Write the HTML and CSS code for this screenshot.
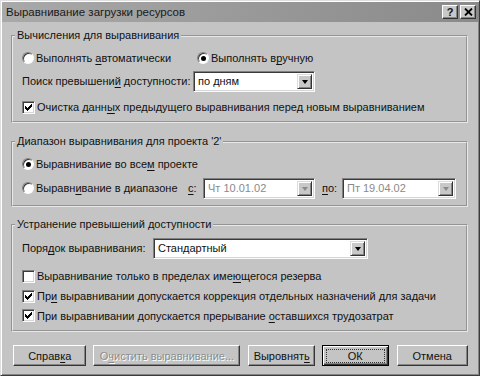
FILE: index.html
```html
<!DOCTYPE html>
<html lang="ru">
<head>
    <meta charset="UTF-8">
    <title>Выравнивание загрузки ресурсов</title>
    <link rel="stylesheet" href="styles.css">
</head>
<body>
<div class="dialog">
    <div class="titlebar">
        <span class="title">Выравнивание загрузки ресурсов</span>
        <span class="capbtn help">?</span>
        <span class="capbtn close">
            <svg width="9" height="8" viewBox="0 0 9 8"><path d="M1 0.5 L8 7.5 M8 0.5 L1 7.5" stroke="#000" stroke-width="1.8"/></svg>
        </span>
    </div>

    <div class="content">
        <fieldset class="group g1">
            <legend>Вычисления для выравнивания</legend>
            <div class="row">
                <label class="opt w-auto"><span class="radio"></span><span>Выполнять <u>а</u>втоматически</span></label>
                <label class="opt"><span class="radio on"></span><span>Выполнять в<u>р</u>учную</span></label>
            </div>
            <div class="row r2">
                <span class="lbl w-search">Поиск превышени<u>й</u> доступности:</span>
                <div class="combo w-days"><span class="val">по дням</span><span class="drop"><i class="arrow"></i></span></div>
            </div>
            <div class="row r3">
                <label class="opt"><span class="check on"></span><span>Очистка данн<u>ы</u>х предыдущего выравнивания перед новым выравниванием</span></label>
            </div>
        </fieldset>

        <fieldset class="group g2">
            <legend>Диапазон выравнивания для проекта '2'</legend>
            <div class="row">
                <label class="opt"><span class="radio on"></span><span>Выравнивание во все<u>м</u> проекте</span></label>
            </div>
            <div class="row r-range">
                <label class="opt w-range"><span class="radio"></span><span>Выравн<u>и</u>вание в диапазоне</span></label>
                <span class="lbl w-from"><u>с</u>:</span>
                <div class="combo off w-date1"><span class="val">Чт 10.01.02</span><span class="drop"><i class="arrow"></i></span></div>
                <span class="lbl w-to"><u>п</u>о:</span>
                <div class="combo off w-date2"><span class="val">Пт 19.04.02</span><span class="drop"><i class="arrow"></i></span></div>
            </div>
        </fieldset>

        <fieldset class="group g3">
            <legend>Устранение превышений доступности</legend>
            <div class="row">
                <span class="lbl w-order">Поря<u>д</u>ок выравнивания:</span>
                <div class="combo w-std"><span class="val">Стандартный</span><span class="drop"><i class="arrow"></i></span></div>
            </div>
            <div class="row c1">
                <label class="opt"><span class="check"></span><span>Выравнивание только в пределах име<u>ю</u>щегося резерва</span></label>
            </div>
            <div class="row">
                <label class="opt"><span class="check on"></span><span>Пр<u>и</u> выравнивании допускается коррекция отдельных назначений для задачи</span></label>
            </div>
            <div class="row c3">
                <label class="opt"><span class="check on"></span><span>При выравнивании допускается прерывание <u>о</u>ставшихся трудозатрат</span></label>
            </div>
        </fieldset>

        <div class="buttons">
            <span class="btn b-help"><span>Справ<u>к</u>а</span></span>
            <span class="btn b-clear disabled"><span>О<u>ч</u>истить выравнивание...</span></span>
            <span class="btn b-level"><span>Выровнят<u>ь</u></span></span>
            <span class="btn b-ok default"><span class="focus">ОК</span></span>
            <span class="btn b-cancel">Отмена</span>
        </div>
    </div>
</div>
</body>
</html>
```

FILE: styles.css
```css
* {
    box-sizing: border-box;
}
body {
    margin: 0;
    font-family: "Liberation Sans", Arial, sans-serif;
    font-size: 11px;
    color: #111;
}
u {
    text-decoration-thickness: 1px;
    text-underline-offset: 2px;
}

.dialog {
    width: 480px;
    height: 376px;
    background: #c4c4c4;
    border: 1px solid;
    border-color: #dedede #3c3c3c #3c3c3c #dedede;
    box-shadow: inset 1px 1px 0 #fff, inset -1px -1px 0 #858585;
    padding: 1px;
    display: flex;
    flex-direction: column;
}

/* title bar */
.titlebar {
    height: 20px;
    background: linear-gradient(to right, #a9a9a9, #8a8a8a);
    display: flex;
    align-items: center;
    padding: 0 2px 0 4px;
}
.title {
    flex: 1;
    color: #1a1a1a;
    font-size: 11.5px;
}
.capbtn {
    width: 16px;
    height: 14px;
    background: #c8c8c8;
    border: 1px solid;
    border-color: #fff #333 #333 #fff;
    box-shadow: inset -1px -1px 0 #858585;
    display: flex;
    align-items: center;
    justify-content: center;
    font-weight: bold;
    font-size: 11px;
    line-height: 1;
}
.help {
    margin-right: 2px;
}

.content {
    padding: 7px 10px 0 9px;
}

/* group boxes */
.group {
    margin: 0;
    padding: 6px 9px 4px 9px;
    border: 2px groove #e8e8e8;
}
.group legend {
    margin-left: -7px;
    padding: 0 2px;
    line-height: 13px;
}
.g2 {
    margin-top: 12px;
    padding-top: 6px;
    padding-bottom: 7px;
}
.g3 {
    margin-top: 11px;
    padding-top: 7px;
    padding-bottom: 5px;
}

.row {
    display: flex;
    align-items: center;
    height: 20px;
}
.r2 {
    margin-top: 3px;
}
.r3 {
    margin-top: 6px;
}
.r-range {
    margin-top: 4px;
}
.c1 {
    margin-top: 8px;
}
.c3 {
    height: 19px;
}

.opt {
    display: flex;
    align-items: center;
    white-space: nowrap;
}
.lbl {
    white-space: nowrap;
    flex-shrink: 0;
}
.w-auto {
    width: 175px;
    flex-shrink: 0;
}
.w-search {
    width: 171px;
}
.w-range {
    width: 166px;
    flex-shrink: 0;
}
.w-from {
    width: 15px;
}
.w-to {
    width: 20px;
    margin-left: 7px;
}
.w-order {
    width: 131px;
}

/* radio and check boxes */
.radio {
    flex-shrink: 0;
    width: 12px;
    height: 12px;
    margin-right: 2px;
    border-radius: 50%;
    background: #fff;
    border: 1px solid;
    border-color: #808080 #fafafa #fafafa #808080;
    box-shadow: inset 1px 1px 0 #3a3a3a;
    display: flex;
    align-items: center;
    justify-content: center;
}
.radio.on::after {
    content: "";
    width: 5px;
    height: 5px;
    border-radius: 50%;
    background: #000;
}
.check {
    flex-shrink: 0;
    width: 13px;
    height: 13px;
    margin-right: 2px;
    background: #fff;
    border: 1px solid;
    border-color: #808080 #fafafa #fafafa #808080;
    box-shadow: inset 1px 1px 0 #3a3a3a, inset -1px -1px 0 #d6d6d6;
}
.check.on {
    background: #fff url("data:image/svg+xml;utf8,<svg xmlns='http://www.w3.org/2000/svg' width='11' height='11'><path d='M2 4h1v1h1v1h1V5h1V4h1V3h1V2h1v3H8v1H7v1H6v1H5v1H4V8H3V7H2z' fill='black'/></svg>") no-repeat 0 0;
}

/* combo boxes */
.combo {
    flex-shrink: 0;
    height: 21px;
    background: #fff;
    border: 1px solid;
    border-color: #808080 #fafafa #fafafa #808080;
    box-shadow: inset 1px 1px 0 #3a3a3a, inset -1px -1px 0 #d6d6d6;
    display: flex;
    align-items: center;
    padding: 2px 2px 2px 4px;
}
.combo .val {
    flex: 1;
}
.combo.off .val {
    color: #8a8a8a;
}
.drop {
    width: 15px;
    height: 15px;
    background: #c8c8c8;
    border: 1px solid;
    border-color: #dcdcdc #333 #333 #dcdcdc;
    box-shadow: inset 1px 1px 0 #fff, inset -1px -1px 0 #858585;
    display: flex;
    align-items: center;
    justify-content: center;
}
.arrow {
    width: 0;
    height: 0;
    border-left: 3.5px solid transparent;
    border-right: 3.5px solid transparent;
    border-top: 4px solid #000;
    margin-top: 1px;
}
.off .arrow {
    border-top-color: #8a8a8a;
}
.w-days {
    width: 122px;
}
.w-date1 {
    width: 112px;
}
.w-date2 {
    width: 114px;
}
.w-std {
    width: 215px;
}

/* push buttons */
.buttons {
    display: flex;
    margin-top: 13px;
    margin-left: 2px;
}
.btn {
    height: 21px;
    background: #c4c4c4;
    border: 1px solid;
    border-color: #fff #363636 #363636 #fff;
    box-shadow: inset -1px -1px 0 #858585;
    display: flex;
    align-items: center;
    justify-content: center;
    white-space: nowrap;
}
.disabled {
    color: #8c8c8c;
    text-shadow: 1px 1px 0 #fff;
}
.b-help {
    width: 74px;
}
.b-clear {
    width: 148px;
    margin-left: 7px;
}
.b-level {
    width: 67px;
    margin-left: 8px;
}
.b-ok {
    width: 67px;
    margin-left: 7px;
}
.b-cancel {
    width: 72px;
    margin-left: 8px;
}
.default {
    border: 1px solid #000;
    box-shadow: inset 1px 1px 0 #fff, inset -1px -1px 0 #363636, inset -2px -2px 0 #858585;
}
.focus {
    width: 59px;
    height: 14px;
    border: 1px dotted #333;
    display: flex;
    align-items: center;
    justify-content: center;
}
```
